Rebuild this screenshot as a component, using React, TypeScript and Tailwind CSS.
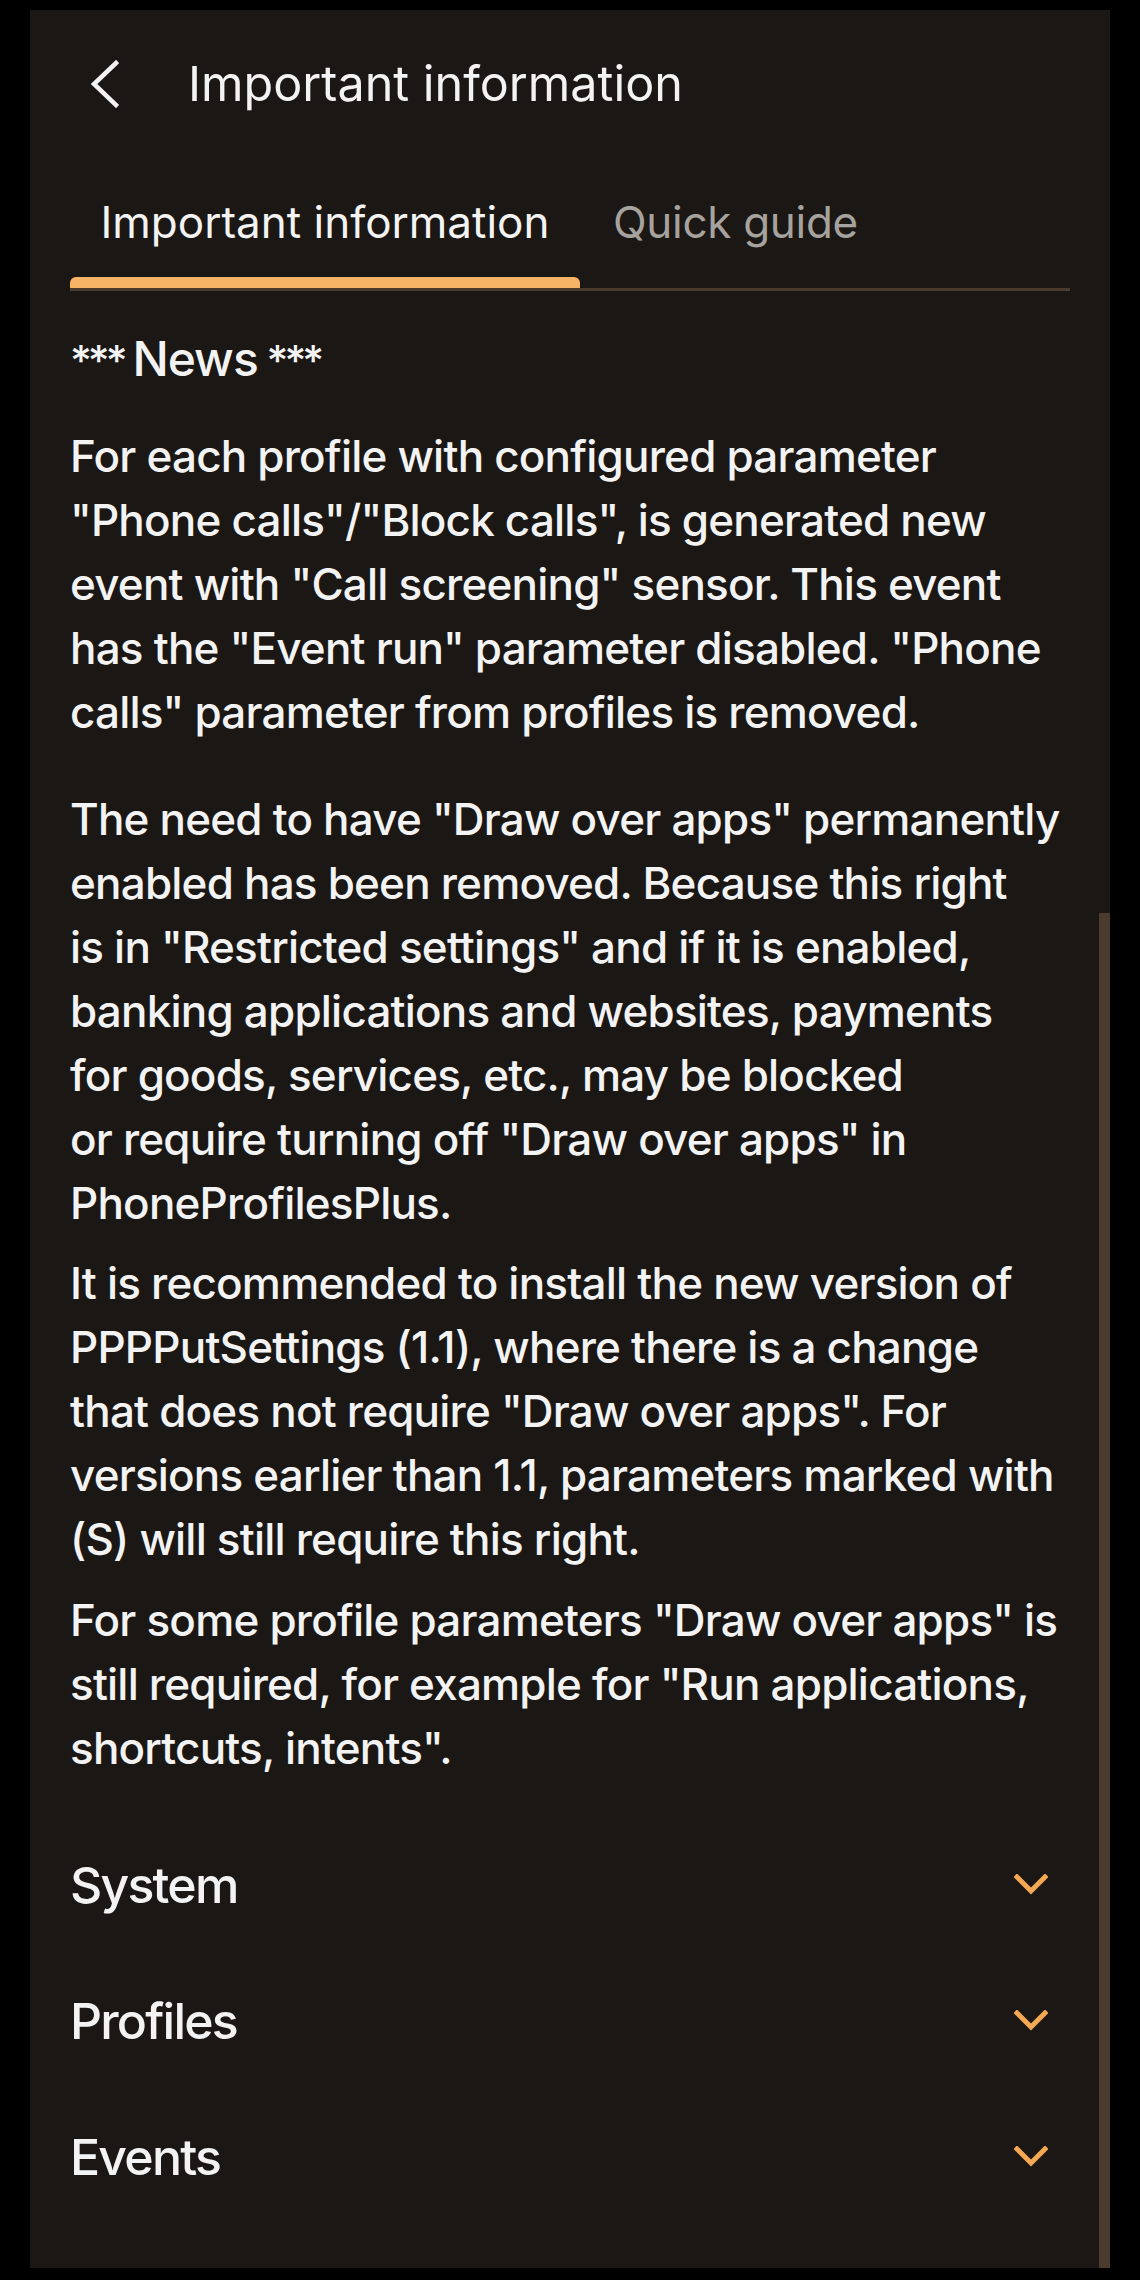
import React from "react";

const FONT = { fontFamily: "Inter, 'Noto Sans', sans-serif" };

function BackIcon() {
  return (
    <svg width="29" height="48" viewBox="0 0 29 48" fill="none">
      <polyline points="26,3 4,24 26,45" stroke="#f3f3f3" strokeWidth="4.5" strokeLinecap="square" strokeLinejoin="miter" />
    </svg>
  );
}

function ChevronDown() {
  return (
    <svg width="34" height="22" viewBox="0 0 34 22" fill="none">
      <polyline points="3,3 17,17 31,3" stroke="#f5a754" strokeWidth="5" strokeLinecap="square" />
    </svg>
  );
}

const SECTIONS = ["System", "Profiles", "Events"];

const PARAS: { lines: string[]; mt: string }[] = [
  {
    mt: "mt-[33px]",
    lines: [
      "For each profile with configured parameter",
      "\"Phone calls\"/\"Block calls\", is generated new",
      "event with \"Call screening\" sensor. This event",
      "has the \"Event run\" parameter disabled. \"Phone",
      "calls\" parameter from profiles is removed.",
    ],
  },
  {
    mt: "mt-[43px]",
    lines: [
      "The need to have \"Draw over apps\" permanently",
      "enabled has been removed. Because this right",
      "is in \"Restricted settings\" and if it is enabled,",
      "banking applications and websites, payments",
      "for goods, services, etc., may be blocked",
      "or require turning off \"Draw over apps\" in",
      "PhoneProfilesPlus.",
    ],
  },
  {
    mt: "mt-[16px]",
    lines: [
      "It is recommended to install the new version of",
      "PPPPutSettings (1.1), where there is a change",
      "that does not require \"Draw over apps\". For",
      "versions earlier than 1.1, parameters marked with",
      "(S) will still require this right.",
    ],
  },
  {
    mt: "mt-[17px]",
    lines: [
      "For some profile parameters \"Draw over apps\" is",
      "still required, for example for \"Run applications,",
      "shortcuts, intents\".",
    ],
  },
];

export default function App() {
  return (
    <div className="bg-black min-h-[2280px] pt-[10px] px-[30px] pb-[12px]" style={FONT}>
      <div className="relative bg-[#1b1714] h-[2258px] overflow-hidden text-[#f3f3f3]">
        {/* header */}
        <div className="mt-[24px] h-[100px] flex items-center pl-[60px]">
          <BackIcon />
          <span className="ml-[69px] text-[48.5px] leading-[64px] font-normal">Important information</span>
        </div>

        {/* tabs */}
        <div className="mx-10 border-b-[3px] border-[#4b3b2d] flex">
          <div className="w-[510px] flex flex-col items-center">
            <span className="pt-[60px] pb-[27px] text-[44px] leading-[56px]">Important information</span>
            <div className="h-[11px] w-full bg-[#f7b366] rounded-t-[6px]" />
          </div>
          <div className="px-[33px] pt-[60px] pb-[38px]">
            <span className="text-[44px] leading-[56px] text-[#a6a29e] tracking-[-0.3px]">Quick guide</span>
          </div>
        </div>

        {/* content */}
        <div className="px-10">
          <p className="mt-[36px] h-[64px] overflow-hidden text-[48px] leading-[64px] font-medium tracking-[-1px] [word-spacing:-3px]">
            <span className="text-[42px] tracking-[-4px]">***</span> News <span className="text-[42px] tracking-[-4px]">***</span>
          </p>

          <div className="text-[44px] leading-[64px] font-medium tracking-[-0.8px] whitespace-nowrap">
            {PARAS.map((p, i) => (
              <p key={i} className={p.mt}>
                {p.lines.map((l, j) => (
                  <span key={j} className="block">
                    {l}
                  </span>
                ))}
              </p>
            ))}
          </div>

          <div className="mt-[37px]">
            {SECTIONS.map((s) => (
              <div key={s} className="h-[136px] flex items-center justify-between pr-[22px]">
                <span className="text-[50px] leading-[64px] font-medium tracking-[-1.8px]">{s}</span>
                <ChevronDown />
              </div>
            ))}
          </div>
        </div>

        {/* scrollbar */}
        <div className="absolute right-0 top-[903px] bottom-0 w-[11px] bg-[#4b3b2d]" />
      </div>
    </div>
  );
}
